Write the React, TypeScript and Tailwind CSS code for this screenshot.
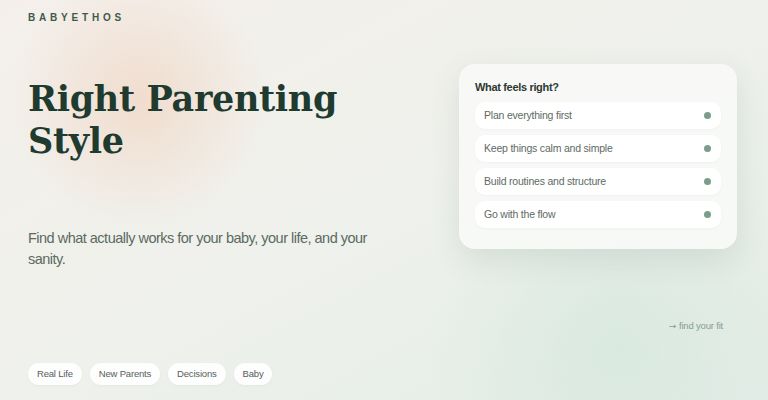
import React from 'react';

const options = [
  'Plan everything first',
  'Keep things calm and simple',
  'Build routines and structure',
  'Go with the flow',
];

const tags = ['Real Life', 'New Parents', 'Decisions', 'Baby'];

export default function App() {
  return (
    <div
      className="relative h-[400px] w-full overflow-hidden bg-gradient-to-br from-[#f4efea] via-[#eff1ec] to-[#e2ece6]"
      style={{ fontFamily: '"Liberation Sans", Arial, sans-serif' }}
    >
      {/* soft background glows */}
      <div className="pointer-events-none absolute left-[10px] top-[-30px] h-[260px] w-[260px] rounded-full bg-[radial-gradient(circle,rgba(240,214,196,0.75)_0%,rgba(240,214,196,0)_70%)]" />
      <div className="pointer-events-none absolute right-[-60px] bottom-[-120px] h-[340px] w-[420px] rounded-full bg-[radial-gradient(circle,rgba(214,232,222,0.8)_0%,rgba(214,232,222,0)_70%)]" />

      <div className="relative flex h-full">
        {/* Left column */}
        <div className="flex flex-1 flex-col pl-[28px] pt-[10px] pb-[15px]">
          <div className="text-[10px] font-bold leading-[15px] tracking-[0.38em] text-[#3f5a4b]">BABYETHOS</div>

          <h1
            className="mt-[53px] text-[35px] font-bold leading-[42px] text-[#1f3a2f]"
            style={{ fontFamily: '"DejaVu Serif", Georgia, serif', letterSpacing: '-0.01em' }}
          >
            Right Parenting
            <br />
            Style
          </h1>

          <p className="mt-[66px] w-[370px] text-[14.5px] leading-[21px] tracking-[-0.035em] text-[#5b6a62]">
            Find what actually works for your baby, your life, and your sanity.
          </p>

          <div className="mt-auto flex gap-[8px]">
            {tags.map((t) => (
              <span
                key={t}
                className="rounded-full bg-white/90 px-[9px] py-[5px] text-[9.5px] leading-[12px] tracking-[-0.02em] text-[#56615b] shadow-[0_1px_3px_rgba(0,0,0,0.04)]"
              >
                {t}
              </span>
            ))}
          </div>
        </div>

        {/* Right column */}
        <div className="flex w-[309px] flex-col pr-[31px] pt-[64px]">
          <div className="rounded-[16px] bg-[#f8faf8]/90 px-[16px] pt-[16px] pb-[21px] shadow-[0_10px_30px_rgba(60,90,75,0.12)]">
            <div className="text-[11px] font-bold leading-[14px] tracking-[-0.03em] text-[#2d3833]">What feels right?</div>
            <div className="mt-[8px] flex flex-col gap-[6px]">
              {options.map((o) => (
                <div
                  key={o}
                  className="flex h-[27px] items-center justify-between rounded-[10px] bg-white pl-[9px] pr-[10px] shadow-[0_1px_3px_rgba(0,0,0,0.03)]"
                >
                  <span className="text-[10.5px] tracking-[-0.02em] text-[#5e6a63]">{o}</span>
                  <span className="h-[7px] w-[7px] rounded-full bg-[#7d9c8c]" />
                </div>
              ))}
            </div>
          </div>

          <div className="mt-[70px] pr-[14px] text-right text-[9.5px] tracking-[-0.02em] text-[#869d92]">
            <span className="mr-[3px] font-['DejaVu_Sans',sans-serif] text-[9px]">→</span>find your fit
          </div>
        </div>
      </div>
    </div>
  );
}
